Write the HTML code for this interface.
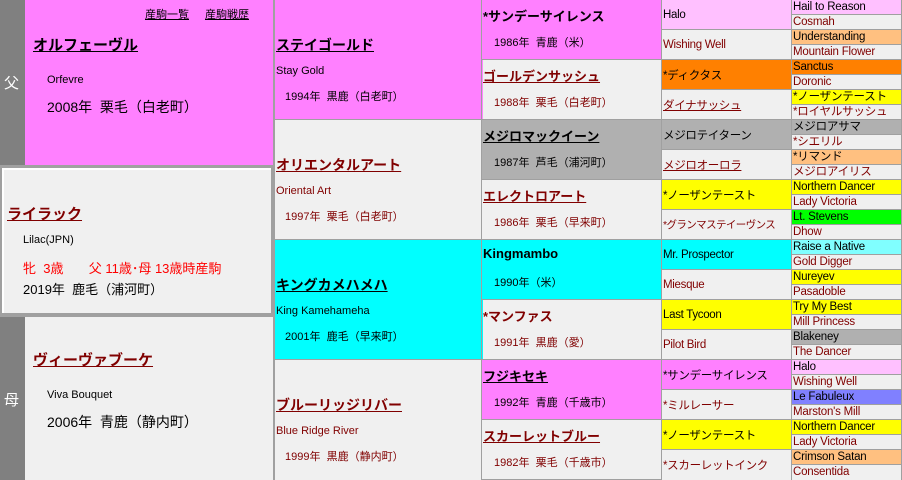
<!DOCTYPE html>
<html><head><meta charset="utf-8"><style>
body{margin:0;width:902px;height:480px;background:#a0a0a0;position:relative;overflow:hidden;font-family:"Liberation Sans","Noto Sans CJK JP",sans-serif;}
div.c{position:absolute;box-sizing:border-box;overflow:hidden;white-space:nowrap}
.r{color:#800000}
.t{position:absolute;white-space:nowrap}
.u{text-decoration:underline}
.b{font-weight:bold}
.c4{font-size:11.5px;padding-left:1px;display:flex;align-items:center;letter-spacing:-0.3px}
.c5{font-size:11.5px;padding-left:1px;line-height:14px;letter-spacing:-0.2px}
.M{background:#ff80ff}.G{background:#f0f0f0}.C{background:#00ffff}.Y{background:#ffff00}.O{background:#ff8000}.LO{background:#ffc080}.P{background:#ffc0ff}.GR{background:#00ff00}.LC{background:#80ffff}.BL{background:#8080ff}.S{background:#b0b0b0}
</style></head><body>
<!-- left -->
<div class="c" style="left:0;top:0;width:25px;height:165px;background:#808080"></div>
<div class="t" style="left:4px;top:72px;color:#fff;font-size:15px">父</div>
<div class="c M" style="left:25px;top:0;width:248px;height:165px"></div>
<div class="t u" style="left:145px;top:6px;font-size:11px">産駒一覧</div>
<div class="t u" style="left:205px;top:6px;font-size:11px">産駒戦歴</div>
<div class="t u b" style="left:33px;top:34px;font-size:15px">オルフェーヴル</div>
<div class="t" style="left:47px;top:74px;font-size:11px">Orfevre</div>
<div class="t" style="left:47px;top:97px;font-size:14px">2008年&nbsp; 栗毛（白老町）</div>
<div class="c G" style="left:2px;top:168px;width:269px;height:145px;border-top:2px solid #fff;border-left:2px solid #fff"></div>
<div class="t u b r" style="left:7px;top:203px;font-size:15px">ライラック</div>
<div class="t" style="left:23px;top:234px;font-size:11px">Lilac(JPN)</div>
<div class="t" style="left:23px;top:258px;font-size:13px;color:#f00">牝&nbsp; 3歳&nbsp;&nbsp;&nbsp;&nbsp;&nbsp;&nbsp; 父 11歳･母 13歳時産駒</div>
<div class="t" style="left:23px;top:279px;font-size:13px">2019年&nbsp; 鹿毛（浦河町）</div>
<div class="c" style="left:0;top:317px;width:25px;height:163px;background:#808080"></div>
<div class="t" style="left:4px;top:389px;color:#fff;font-size:15px">母</div>
<div class="c G" style="left:25px;top:317px;width:248px;height:163px"></div>
<div class="t u b r" style="left:33px;top:349px;font-size:15px">ヴィーヴァブーケ</div>
<div class="t" style="left:47px;top:389px;font-size:11px">Viva Bouquet</div>
<div class="t" style="left:47px;top:412px;font-size:14px">2006年&nbsp; 青鹿（静内町）</div>

<!-- col2 -->
<div class="c M" style="left:275px;top:0;width:206px;height:119px"><div class="t u b" style="left:1px;top:35px;font-size:14px">ステイゴールド</div><div class="t" style="left:1px;top:65px;font-size:11px">Stay Gold</div><div class="t" style="left:10px;top:88px;font-size:11px">1994年&nbsp; 黒鹿（白老町）</div></div>
<div class="c G r" style="left:275px;top:120px;width:206px;height:119px"><div class="t u b" style="left:1px;top:35px;font-size:14px">オリエンタルアート</div><div class="t" style="left:1px;top:65px;font-size:11px">Oriental Art</div><div class="t" style="left:10px;top:88px;font-size:11px">1997年&nbsp; 栗毛（白老町）</div></div>
<div class="c C" style="left:275px;top:240px;width:206px;height:119px"><div class="t u b" style="left:1px;top:35px;font-size:14px">キングカメハメハ</div><div class="t" style="left:1px;top:65px;font-size:11px">King Kamehameha</div><div class="t" style="left:10px;top:88px;font-size:11px">2001年&nbsp; 鹿毛（早来町）</div></div>
<div class="c G r" style="left:275px;top:360px;width:206px;height:120px"><div class="t u b" style="left:1px;top:35px;font-size:14px">ブルーリッジリバー</div><div class="t" style="left:1px;top:65px;font-size:11px">Blue Ridge River</div><div class="t" style="left:10px;top:88px;font-size:11px">1999年&nbsp; 黒鹿（静内町）</div></div>

<!-- col3 -->
<div class="c M" style="left:482px;top:0;width:179px;height:59px"><div class="t b" style="left:1px;top:6px;font-size:13px">*サンデーサイレンス</div><div class="t" style="left:12px;top:34px;font-size:11px">1986年&nbsp; 青鹿（米）</div></div>
<div class="c G r" style="left:482px;top:60px;width:179px;height:59px;border-left:1px solid #ff80ff"><div class="t b u" style="left:0px;top:6px;font-size:13px">ゴールデンサッシュ</div><div class="t" style="left:11px;top:34px;font-size:11px">1988年&nbsp; 栗毛（白老町）</div></div>
<div class="c S" style="left:482px;top:120px;width:179px;height:59px"><div class="t b u" style="left:1px;top:6px;font-size:13px">メジロマックイーン</div><div class="t" style="left:12px;top:34px;font-size:11px">1987年&nbsp; 芦毛（浦河町）</div></div>
<div class="c G r" style="left:482px;top:180px;width:179px;height:59px"><div class="t b u" style="left:1px;top:6px;font-size:13px">エレクトロアート</div><div class="t" style="left:12px;top:34px;font-size:11px">1986年&nbsp; 栗毛（早来町）</div></div>
<div class="c C" style="left:482px;top:240px;width:179px;height:59px"><div class="t b" style="left:1px;top:6px;font-size:13px">Kingmambo</div><div class="t" style="left:12px;top:34px;font-size:11px">1990年（米）</div></div>
<div class="c G r" style="left:482px;top:300px;width:179px;height:59px;border-left:1px solid #00ffff"><div class="t b" style="left:0px;top:6px;font-size:13px">*マンファス</div><div class="t" style="left:11px;top:34px;font-size:11px">1991年&nbsp; 黒鹿（愛）</div></div>
<div class="c M" style="left:482px;top:360px;width:179px;height:59px"><div class="t b u" style="left:1px;top:6px;font-size:13px">フジキセキ</div><div class="t" style="left:12px;top:34px;font-size:11px">1992年&nbsp; 青鹿（千歳市）</div></div>
<div class="c G r" style="left:482px;top:420px;width:179px;height:59px"><div class="t b u" style="left:1px;top:6px;font-size:13px">スカーレットブルー</div><div class="t" style="left:12px;top:34px;font-size:11px">1982年&nbsp; 栗毛（千歳市）</div></div>

<!-- col4 -->
<div class="c c4 P" style="left:662px;top:0;width:129px;height:29px">Halo</div>
<div class="c c4 G r" style="left:662px;top:30px;width:129px;height:29px">Wishing Well</div>
<div class="c c4 O" style="left:662px;top:60px;width:129px;height:29px">*ディクタス</div>
<div class="c c4 G r" style="left:662px;top:90px;width:129px;height:29px"><span class="u">ダイナサッシュ</span></div>
<div class="c c4 S" style="left:662px;top:120px;width:129px;height:29px">メジロテイターン</div>
<div class="c c4 G r" style="left:662px;top:150px;width:129px;height:29px"><span class="u">メジロオーロラ</span></div>
<div class="c c4 Y" style="left:662px;top:180px;width:129px;height:29px">*ノーザンテースト</div>
<div class="c c4 G r" style="left:662px;top:210px;width:129px;height:29px;font-size:10.5px;letter-spacing:-0.6px">*グランマステイーヴンス</div>
<div class="c c4 C" style="left:662px;top:240px;width:129px;height:29px">Mr. Prospector</div>
<div class="c c4 G r" style="left:662px;top:270px;width:129px;height:29px">Miesque</div>
<div class="c c4 Y" style="left:662px;top:300px;width:129px;height:29px">Last Tycoon</div>
<div class="c c4 G r" style="left:662px;top:330px;width:129px;height:29px">Pilot Bird</div>
<div class="c c4 M" style="left:662px;top:360px;width:129px;height:29px">*サンデーサイレンス</div>
<div class="c c4 G r" style="left:662px;top:390px;width:129px;height:29px">*ミルレーサー</div>
<div class="c c4 Y" style="left:662px;top:420px;width:129px;height:29px">*ノーザンテースト</div>
<div class="c c4 G r" style="left:662px;top:450px;width:129px;height:30px">*スカーレットインク</div>

<!-- col5 -->
<div class="c c5 P" style="left:792px;top:0;width:109px;height:14px">Hail to Reason</div>
<div class="c c5 G r" style="left:792px;top:15px;width:109px;height:14px">Cosmah</div>
<div class="c c5 LO" style="left:792px;top:30px;width:109px;height:14px">Understanding</div>
<div class="c c5 G r" style="left:792px;top:45px;width:109px;height:14px">Mountain Flower</div>
<div class="c c5 O" style="left:792px;top:60px;width:109px;height:14px">Sanctus</div>
<div class="c c5 G r" style="left:792px;top:75px;width:109px;height:14px">Doronic</div>
<div class="c c5 Y" style="left:792px;top:90px;width:109px;height:14px">*ノーザンテースト</div>
<div class="c c5 G r" style="left:792px;top:105px;width:109px;height:14px">*ロイヤルサッシュ</div>
<div class="c c5 S" style="left:792px;top:120px;width:109px;height:14px">メジロアサマ</div>
<div class="c c5 G r" style="left:792px;top:135px;width:109px;height:14px">*シエリル</div>
<div class="c c5 LO" style="left:792px;top:150px;width:109px;height:14px">*リマンド</div>
<div class="c c5 G r" style="left:792px;top:165px;width:109px;height:14px">メジロアイリス</div>
<div class="c c5 Y" style="left:792px;top:180px;width:109px;height:14px">Northern Dancer</div>
<div class="c c5 G r" style="left:792px;top:195px;width:109px;height:14px">Lady Victoria</div>
<div class="c c5 GR" style="left:792px;top:210px;width:109px;height:14px">Lt. Stevens</div>
<div class="c c5 G r" style="left:792px;top:225px;width:109px;height:14px">Dhow</div>
<div class="c c5 LC" style="left:792px;top:240px;width:109px;height:14px">Raise a Native</div>
<div class="c c5 G r" style="left:792px;top:255px;width:109px;height:14px">Gold Digger</div>
<div class="c c5 Y" style="left:792px;top:270px;width:109px;height:14px">Nureyev</div>
<div class="c c5 G r" style="left:792px;top:285px;width:109px;height:14px">Pasadoble</div>
<div class="c c5 Y" style="left:792px;top:300px;width:109px;height:14px">Try My Best</div>
<div class="c c5 G r" style="left:792px;top:315px;width:109px;height:14px">Mill Princess</div>
<div class="c c5 S" style="left:792px;top:330px;width:109px;height:14px">Blakeney</div>
<div class="c c5 G r" style="left:792px;top:345px;width:109px;height:14px">The Dancer</div>
<div class="c c5 P" style="left:792px;top:360px;width:109px;height:14px">Halo</div>
<div class="c c5 G r" style="left:792px;top:375px;width:109px;height:14px">Wishing Well</div>
<div class="c c5 BL" style="left:792px;top:390px;width:109px;height:14px">Le Fabuleux</div>
<div class="c c5 G r" style="left:792px;top:405px;width:109px;height:14px">Marston's Mill</div>
<div class="c c5 Y" style="left:792px;top:420px;width:109px;height:14px">Northern Dancer</div>
<div class="c c5 G r" style="left:792px;top:435px;width:109px;height:14px">Lady Victoria</div>
<div class="c c5 LO" style="left:792px;top:450px;width:109px;height:14px">Crimson Satan</div>
<div class="c c5 G r" style="left:792px;top:465px;width:109px;height:15px">Consentida</div>
</body></html>
